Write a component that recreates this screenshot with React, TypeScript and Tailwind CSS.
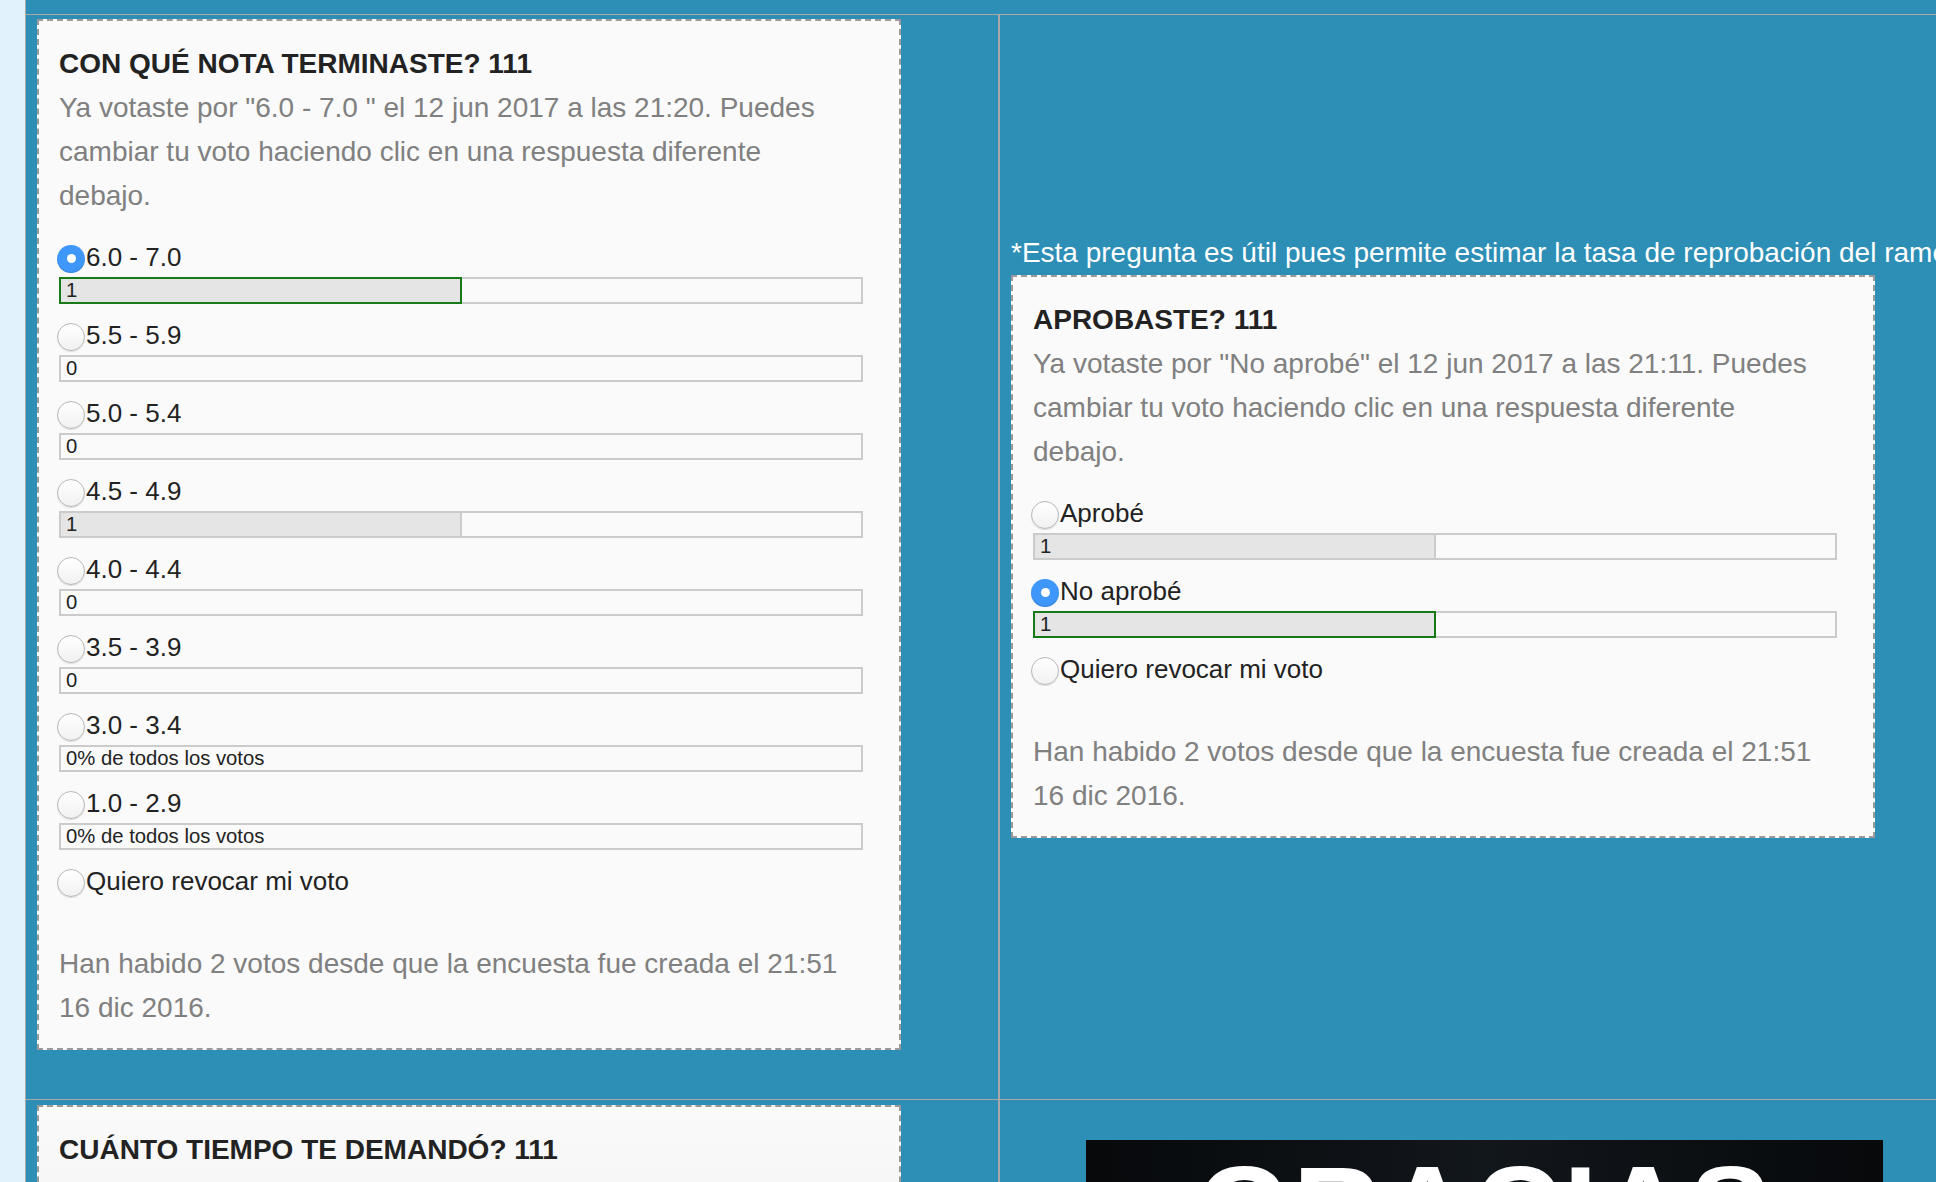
import React from 'react';

interface PollOption {
  label: string;
  value?: string;
  pct?: number;
  checked?: boolean;
}

const gradeOptions: PollOption[] = [
  { label: '6.0 - 7.0', value: '1', pct: 50, checked: true },
  { label: '5.5 - 5.9', value: '0', pct: 0 },
  { label: '5.0 - 5.4', value: '0', pct: 0 },
  { label: '4.5 - 4.9', value: '1', pct: 50 },
  { label: '4.0 - 4.4', value: '0', pct: 0 },
  { label: '3.5 - 3.9', value: '0', pct: 0 },
  { label: '3.0 - 3.4', value: '0% de todos los votos', pct: 0 },
  { label: '1.0 - 2.9', value: '0% de todos los votos', pct: 0 },
  { label: 'Quiero revocar mi voto' },
];

const passOptions: PollOption[] = [
  { label: 'Aprobé', value: '1', pct: 50 },
  { label: 'No aprobé', value: '1', pct: 50, checked: true },
  { label: 'Quiero revocar mi voto' },
];

function Radio({ checked }: { checked?: boolean }) {
  if (checked) {
    return (
      <span className="-ml-[2px] flex h-[28px] w-[28px] shrink-0 items-center justify-center rounded-full bg-[#3f97f9] shadow-[inset_0_-1px_1px_rgba(0,0,0,0.15)]">
        <span className="h-[9px] w-[9px] rounded-full bg-white" />
      </span>
    );
  }
  return (
    <span className="-ml-[2px] h-[28px] w-[28px] shrink-0 rounded-full border border-[#b8b8b8] bg-gradient-to-b from-white to-[#f1f1f1] shadow-[0_1px_1px_rgba(0,0,0,0.12)]" />
  );
}

function ResultBar({ value, pct, checked }: { value: string; pct: number; checked?: boolean }) {
  return (
    <div className="relative h-[27px] w-[804px] border-2 border-[#cbcbcb] bg-[#fafafa]">
      {pct > 0 && (
        <div
          className={
            checked
              ? 'absolute -top-[2px] -bottom-[2px] -left-[2px] border-2 border-[#177a17] bg-[#e5e5e5]'
              : 'absolute -top-[2px] -bottom-[2px] -left-[2px] border-2 border-[#cbcbcb] bg-[#e5e5e5]'
          }
          style={{ width: `calc(${pct}% + 3px)` }}
        />
      )}
      <span className="relative block pl-[5px] text-[20.3px] leading-[23px] text-[#222]">{value}</span>
    </div>
  );
}

function PollCard({
  title,
  voted,
  options,
}: {
  title: string;
  voted: React.ReactNode;
  options: PollOption[];
}) {
  return (
    <div className="w-[864px] border-2 border-dashed border-[#9a9a9a] bg-[#fafafa] pt-[25px] pr-[36px] pb-[18px] pl-[20px]">
      <h2 className="text-[28px] font-bold leading-[36px] text-[#222]">{title}</h2>
      <p className="mt-[4px] whitespace-nowrap text-[28px] leading-[44px] text-[#808080]">
        {voted}
        <br />
        cambiar tu voto haciendo clic en una respuesta diferente
        <br />
        debajo.
      </p>

      <div className="mt-[22px] flex flex-col">
        {options.map((opt) => (
          <div key={opt.label} className="mb-[14px]">
            <label className="flex h-[37px] items-center">
              <Radio checked={opt.checked} />
              <span className="mb-[3px] ml-[1px] whitespace-nowrap text-[26px] leading-[32px] text-[#222]">
                {opt.label}
              </span>
            </label>
            {opt.value !== undefined && (
              <ResultBar value={opt.value} pct={opt.pct ?? 0} checked={opt.checked} />
            )}
          </div>
        ))}
      </div>

      <p className="mt-[27px] whitespace-nowrap text-[28px] leading-[44px] text-[#808080]">
        Han habido 2 votos desde que la encuesta fue creada el 21:51
        <br />
        16 dic 2016.
      </p>
    </div>
  );
}

export default function App() {
  return (
    <div className="flex h-screen w-screen overflow-hidden font-['Liberation_Sans',Arial,sans-serif]">
      <div className="w-[25px] shrink-0 bg-[#e1f2fc]" />
      <div className="min-w-0 flex-1 border-l border-[#a8a8a8] bg-[#2d8eb6]">
        <div className="h-[14px]" />

        {/* row 1 */}
        <div className="flex border-t border-[#a8a8a8]">
          <div className="w-[972px] shrink-0 pt-[4px] pb-[49px] pl-[11px]">
            <PollCard
              title="CON QUÉ NOTA TERMINASTE? 111"
              voted={<>Ya votaste por &quot;6.0 - 7.0 &quot; el 12 jun 2017 a las 21:20. Puedes</>}
              options={gradeOptions}
            />
          </div>
          <div className="min-w-0 flex-1 border-l-2 border-[#a8a8a8] pt-[216px] pl-[11px]">
            <p className="whitespace-nowrap text-[28px] leading-[44px] text-white">
              *Esta pregunta es útil pues permite estimar la tasa de reprobación del ramo
            </p>
            <PollCard
              title="APROBASTE? 111"
              voted={<>Ya votaste por &quot;No aprobé&quot; el 12 jun 2017 a las 21:11. Puedes</>}
              options={passOptions}
            />
          </div>
        </div>

        {/* row 2 */}
        <div className="flex border-t border-[#a8a8a8]">
          <div className="w-[972px] shrink-0 pt-[5px] pl-[11px]">
            <div className="h-[200px] w-[864px] border-2 border-dashed border-[#9a9a9a] bg-gradient-to-b from-[#fafafa] to-[#f2f2f2] pt-[25px] pl-[20px]">
              <h2 className="text-[28px] font-bold leading-[36px] text-[#222]">
                CUÁNTO TIEMPO TE DEMANDÓ? 111
              </h2>
            </div>
          </div>
          <div className="min-w-0 flex-1 border-l-2 border-[#a8a8a8] pt-[40px] pl-[86px]">
            <div className="h-[200px] w-[797px] bg-gradient-to-r from-[#07090b] via-[#12171c] to-[#07090b] pt-[9px] text-center">
              <span className="text-[122px] font-bold leading-none tracking-[2px] text-white">
                GRACIAS
              </span>
            </div>
          </div>
        </div>
      </div>
    </div>
  );
}
